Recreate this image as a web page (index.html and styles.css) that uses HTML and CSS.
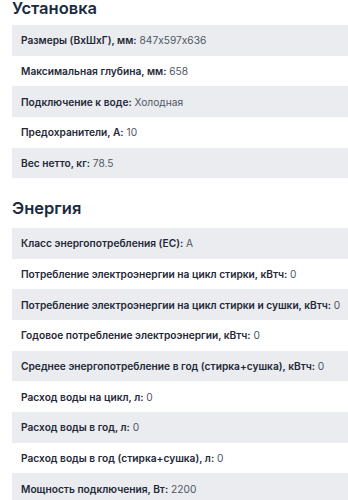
FILE: index.html
```html
<!DOCTYPE html>
<html lang="ru">
<head>
<meta charset="utf-8">
<link rel="stylesheet" href="styles.css">
</head>
<body>
<section class="spec spec-first">
  <h2 class="spec-title">Установка</h2>
  <div class="spec-list">
    <div class="row"><b>Размеры (ВхШхГ), мм:</b>&nbsp;<span>847x597x636</span></div>
    <div class="row"><b>Максимальная глубина, мм:</b>&nbsp;<span>658</span></div>
    <div class="row"><b>Подключение к воде:</b>&nbsp;<span>Холодная</span></div>
    <div class="row"><b>Предохранители, А:</b>&nbsp;<span>10</span></div>
    <div class="row"><b>Вес нетто, кг:</b>&nbsp;<span>78.5</span></div>
  </div>
</section>
<section class="spec spec-second">
  <h2 class="spec-title">Энергия</h2>
  <div class="spec-list">
    <div class="row"><b>Класс энергопотребления (ЕС):</b>&nbsp;<span>A</span></div>
    <div class="row"><b>Потребление электроэнергии на цикл стирки, кВтч:</b>&nbsp;<span>0</span></div>
    <div class="row"><b>Потребление электроэнергии на цикл стирки и сушки, кВтч:</b>&nbsp;<span>0</span></div>
    <div class="row"><b>Годовое потребление электроэнергии, кВтч:</b>&nbsp;<span>0</span></div>
    <div class="row"><b>Среднее энергопотребление в год (стирка+сушка), кВтч:</b>&nbsp;<span>0</span></div>
    <div class="row"><b>Расход воды на цикл, л:</b>&nbsp;<span>0</span></div>
    <div class="row"><b>Расход воды в год, л:</b>&nbsp;<span>0</span></div>
    <div class="row"><b>Расход воды в год (стирка+сушка), л:</b>&nbsp;<span>0</span></div>
    <div class="row"><b>Мощность подключения, Вт:</b>&nbsp;<span>2200</span></div>
  </div>
</section>
</body>
</html>
```
FILE: styles.css
```css
html, body {
  margin: 0;
  padding: 0;
  background: #ffffff;
}
body {
  padding-left: 12px;
  font-family: "Inter", "Noto Sans", sans-serif;
  font-feature-settings: "calt" 0;
  overflow: hidden;
}
.spec-title {
  margin: 0;
  font-size: 16.5px;
  line-height: 17px;
  font-weight: 600;
  color: #1b2a3e;
}
.spec-first .spec-title {
  margin-bottom: 8px;
}
.spec-second {
  margin-top: 21.3px;
}
.spec-second .spec-title {
  margin-bottom: 11.2px;
}
.spec-list {
  display: flex;
  flex-direction: column;
}
.row {
  display: flex;
  align-items: center;
  height: 30.7px;
  padding-left: 9px;
  font-size: 10.2px;
  color: #4f5663;
  white-space: nowrap;
}
.row:nth-child(odd) {
  background: #eaecf0;
}
.row b {
  font-weight: 600;
  color: #1f2937;
}
```
